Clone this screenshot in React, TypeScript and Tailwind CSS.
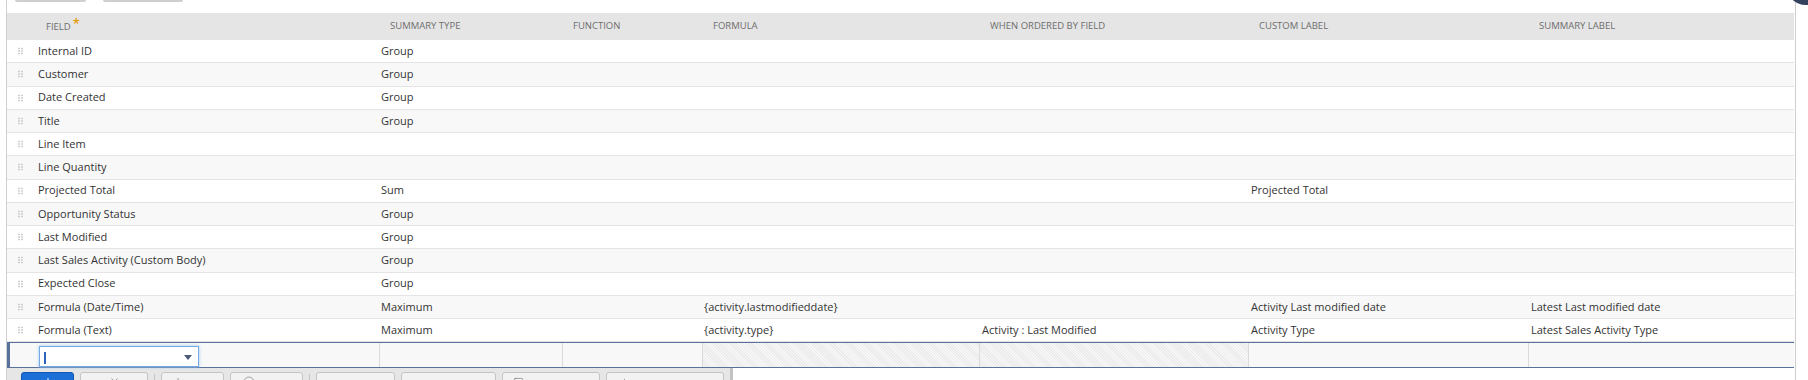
import { Plus, X, Square, CircleMinus } from "lucide-react";

const COLS =
  "grid grid-cols-[26px_344px_183px_140px_277px_269px_280px_268px]";

const HEADERS = [
  "",
  "Field",
  "Summary Type",
  "Function",
  "Formula",
  "When Ordered by Field",
  "Custom Label",
  "Summary Label",
];

type Line = {
  field: string;
  summary?: string;
  formula?: string;
  orderedBy?: string;
  custom?: string;
  summaryLabel?: string;
};

const LINES: Line[] = [
  { field: "Internal ID", summary: "Group" },
  { field: "Customer", summary: "Group" },
  { field: "Date Created", summary: "Group" },
  { field: "Title", summary: "Group" },
  { field: "Line Item" },
  { field: "Line Quantity" },
  { field: "Projected Total", summary: "Sum", custom: "Projected Total" },
  { field: "Opportunity Status", summary: "Group" },
  { field: "Last Modified", summary: "Group" },
  { field: "Last Sales Activity (Custom Body)", summary: "Group" },
  { field: "Expected Close", summary: "Group" },
  {
    field: "Formula (Date/Time)",
    summary: "Maximum",
    formula: "{activity.lastmodifieddate}",
    custom: "Activity Last modified date",
    summaryLabel: "Latest Last modified date",
  },
  {
    field: "Formula (Text)",
    summary: "Maximum",
    formula: "{activity.type}",
    orderedBy: "Activity : Last Modified",
    custom: "Activity Type",
    summaryLabel: "Latest Sales Activity Type",
  },
];

function Grip() {
  return (
    <svg width="5" height="8" viewBox="0 0 5 8" className="ml-[11px]">
      {[1.5, 4, 6.5].map((y) => (
        <g key={y} fill="#b8b8b8">
          <rect x="0.3" y={y - 0.7} width="1.4" height="1.4" />
          <rect x="3.3" y={y - 0.7} width="1.4" height="1.4" />
        </g>
      ))}
    </svg>
  );
}

const HATCH =
  "bg-[repeating-linear-gradient(45deg,#ebebeb_0px,#ebebeb_1px,#f7f7f7_1px,#f7f7f7_2px)]";

export default function App() {
  return (
    <div className="relative h-[380px] w-[1808px] overflow-hidden bg-white font-['Open_Sans',sans-serif] text-[11px] text-[#333]">
      <div className="absolute left-[1786px] top-[-35px] h-[40px] w-[40px] rounded-full bg-[#34425e]" />

      <div className="ml-[6px] h-[380px] w-[1790px] border-x border-[#cfcfcf] pr-[1px]">
        {/* buttons above, only their bottom edge shows */}
        <div className="flex h-[13px] items-start gap-[17px] pl-[8px]">
          <div className="h-[2px] w-[71px] rounded-b-[2px] border-b-2 border-[#cfcfcf] bg-[#eee]" />
          <div className="h-[2px] w-[80px] rounded-b-[2px] border-b-2 border-[#cfcfcf] bg-[#eee]" />
        </div>

        {/* header */}
        <div className={`${COLS} h-[27px] items-center bg-[#e5e5e5]`}>
          {HEADERS.map((h, i) => (
            <div
              key={i}
              className="pl-[13px] text-[9.5px] uppercase text-[#6e6e6e]"
            >
              {h}
              {i === 1 && (
                <span className="relative top-[-2px] ml-[2px] text-[13px] font-semibold leading-none text-[#e39b0f]">
                  *
                </span>
              )}
            </div>
          ))}
        </div>

        {/* lines */}
        {LINES.map((l, i) => (
          <div
            key={l.field}
            className={`${COLS} h-[23.25px] items-center border-b border-[#e4e4e4] ${
              i % 2 === 0 ? "bg-white" : "bg-[#f8f8f8]"
            }`}
          >
            <Grip />
            <div className="pl-[5px]">{l.field}</div>
            <div className="pl-[4px]">{l.summary}</div>
            <div className="pl-[4px]" />
            <div className="pl-[4px]">{l.formula}</div>
            <div className="pl-[5px]">{l.orderedBy}</div>
            <div className="pl-[5px]">{l.custom}</div>
            <div className="pl-[5px]">{l.summaryLabel}</div>
          </div>
        ))}

        {/* edit line */}
        <div
          className={`${COLS} h-[26px] border-y border-l-[3px] border-[#5a719c] bg-[#f8f8f8]`}
        >
          <div className="ml-[-3px]" />
          <div className="border-r border-[#dadada] pl-[3px] pt-[3px]">
            <div className="relative h-[21px] w-[160px] border border-[#74a9e3] bg-white shadow-[0_0_3px_#9cc6f0]">
              <div className="absolute left-[4px] top-[5px] h-[12px] w-[1.5px] bg-[#2d63b8]" />
              <div className="absolute right-[6px] top-[8px] h-0 w-0 border-x-[4px] border-t-[5px] border-x-transparent border-t-[#4a5b7a]" />
            </div>
          </div>
          <div className="border-r border-[#dadada]" />
          <div className="border-r border-[#dadada]" />
          <div className={`border-r border-[#dadada] ${HATCH}`} />
          <div className={`border-r border-[#dadada] ${HATCH}`} />
          <div className="border-r border-[#dadada]" />
          <div />
        </div>

        {/* toolbar below, cut off by the window */}
        <div className="flex h-[40px] w-[726px] items-start gap-[6px] border-r-[3px] border-[#c2c2c2] bg-[#e6e6e6] pl-[14px] pt-[4px]">
          <div className="flex h-[26px] w-[53px] justify-center rounded-[3px] border border-[#1556b0] bg-[#1d6fd8] pt-[3px] text-white">
            <Plus size={12} strokeWidth={2} />
          </div>
          <div className="flex h-[26px] w-[68px] justify-center rounded-[3px] border border-[#c5c5c5] bg-[#f2f2f2] pt-[3px] text-[#777]">
            <X size={11} strokeWidth={1.5} />
          </div>
          <div className="mt-[2px] h-[12px] w-px bg-[#c5c5c5]" />
          <div className="flex h-[26px] w-[63px] rounded-[3px] border border-[#c5c5c5] bg-[#f2f2f2] pl-[10px] pt-[3px] text-[#777]">
            <Plus size={12} strokeWidth={1.5} />
          </div>
          <div className="flex h-[26px] w-[73px] rounded-[3px] border border-[#c5c5c5] bg-[#f2f2f2] pl-[12px] pt-[3px] text-[#888]">
            <CircleMinus size={12} strokeWidth={1.5} />
          </div>
          <div className="mt-[2px] h-[12px] w-px bg-[#c5c5c5]" />
          <div className="h-[26px] w-[79px] rounded-[3px] border border-[#c5c5c5] bg-[#f2f2f2]" />
          <div className="h-[26px] w-[95px] rounded-[3px] border border-[#c5c5c5] bg-[#f2f2f2]" />
          <div className="flex h-[26px] w-[98px] rounded-[3px] border border-[#c5c5c5] bg-[#f2f2f2] pl-[10px] pt-[4px] text-[#777]">
            <Square size={11} strokeWidth={1.5} />
          </div>
          <div className="flex h-[26px] w-[118px] rounded-[3px] border border-[#c5c5c5] bg-[#f2f2f2] pl-[12px] pt-[4px] text-[#777]">
            <Plus size={11} strokeWidth={1.5} />
          </div>
        </div>
      </div>
    </div>
  );
}
